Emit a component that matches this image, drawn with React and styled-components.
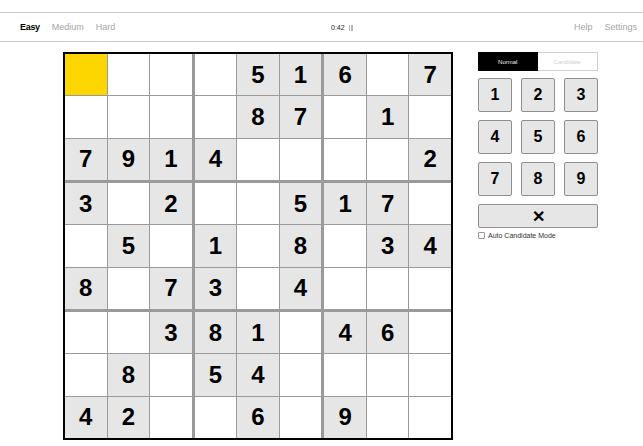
import React from 'react';
import styled, { createGlobalStyle } from 'styled-components';

const GlobalStyle = createGlobalStyle`
  body {
    margin: 0;
    background: #fff;
    font-family: "Liberation Sans", Arial, sans-serif;
  }
`;

const Page = styled.div`
  width: 643px;
  height: 446px;
  overflow: hidden;
  padding-top: 12px;
  box-sizing: border-box;
`;

const Header = styled.header`
  display: flex;
  align-items: center;
  height: 28px;
  border-top: 1px solid #c8c8c8;
  border-bottom: 1px solid #c8c8c8;
  padding: 0 6px 0 20px;
  font-size: 9px;
`;

const Levels = styled.nav`
  display: flex;
  gap: 12px;
  flex: 0 0 311px;
`;

const Level = styled.span`
  color: ${p => (p.$active ? '#000' : '#a6a6a6')};
  font-weight: ${p => (p.$active ? 700 : 400)};
  letter-spacing: ${p => (p.$active ? '-0.3px' : '0')};
`;

const Timer = styled.div`
  display: flex;
  align-items: center;
  gap: 4px;
  font-size: 7px;
  color: #222;
`;

const PauseIcon = styled.span`
  display: inline-flex;
  gap: 1px;
  margin-top: 2px;
  span {
    width: 1.5px;
    height: 6px;
    background: #b5b5b5;
  }
`;

const Links = styled.nav`
  margin-left: auto;
  display: flex;
  gap: 12px;
  color: #a6a6a6;
`;

const Main = styled.main`
  display: flex;
  align-items: flex-start;
  padding: 10px 0 0 63px;
  gap: 25px;
`;

const Board = styled.div`
  width: 390px;
  height: 388px;
  box-sizing: border-box;
  border: 2px solid #000;
  background: #9a9a9a;
  display: grid;
  grid-template-columns: repeat(3, 1fr);
  grid-template-rows: repeat(3, 1fr);
  gap: 3px;
`;

const Box = styled.div`
  display: grid;
  grid-template-columns: repeat(3, 1fr);
  grid-template-rows: repeat(3, 1fr);
  gap: 1px;
`;

const Cell = styled.div`
  display: flex;
  align-items: center;
  justify-content: center;
  background: ${p => (p.$selected ? '#fdd600' : p.$given ? '#e6e6e6' : '#fff')};
  font-size: 24px;
  font-weight: 700;
  color: #000;
`;

const Panel = styled.aside`
  width: 120px;
  display: flex;
  flex-direction: column;
`;

const Toggle = styled.div`
  display: flex;
  height: 19px;
  border: 1px solid #d0d0d0;
  box-sizing: border-box;
`;

const ToggleOption = styled.div`
  flex: 1;
  display: flex;
  align-items: center;
  justify-content: center;
  font-size: 6px;
  background: ${p => (p.$on ? '#000' : '#fff')};
  color: ${p => (p.$on ? '#eee' : '#cfcfcf')};
  margin: ${p => (p.$on ? '-1px 0 -1px -1px' : '0')};
`;

const Keypad = styled.div`
  display: grid;
  grid-template-columns: repeat(3, 34px);
  grid-auto-rows: 34px;
  column-gap: 9px;
  row-gap: 8px;
  margin-top: 7px;
`;

const Key = styled.button`
  display: flex;
  align-items: center;
  justify-content: center;
  padding: 0;
  background: #e6e6e6;
  border: 1px solid #8f8f8f;
  border-radius: 2px;
  font-family: "Liberation Sans", Arial, sans-serif;
  font-weight: 700;
  font-size: 16px;
  color: #000;
`;

const EraseKey = styled(Key)`
  margin-top: 8px;
  height: 24px;
  width: 120px;
  font-size: 16px;
`;

const AutoMode = styled.label`
  display: flex;
  align-items: center;
  gap: 3px;
  margin-top: 4px;
  font-size: 7px;
  color: #333;
`;

const Box5 = styled.span`
  width: 5px;
  height: 5px;
  border: 1px solid #999;
  border-radius: 1px;
`;

const puzzle = [
  '....516.7',
  '....87.1.',
  '7914....2',
  '3.2..517.',
  '.5.1.8.34',
  '8.73.4...',
  '..381.46.',
  '.8.54....',
  '42..6.9..',
];

const cellAt = (r, c) => {
  const ch = puzzle[r][c];
  return ch === '.' ? null : ch;
};

export default function App() {
  const boxes = [];
  for (let b = 0; b < 9; b++) {
    const br = Math.floor(b / 3) * 3;
    const bc = (b % 3) * 3;
    const cells = [];
    for (let i = 0; i < 9; i++) {
      const r = br + Math.floor(i / 3);
      const c = bc + (i % 3);
      const v = cellAt(r, c);
      cells.push(
        <Cell key={i} $given={!!v} $selected={r === 0 && c === 0}>
          {v}
        </Cell>
      );
    }
    boxes.push(<Box key={b}>{cells}</Box>);
  }

  return (
    <Page>
      <GlobalStyle />
      <Header>
        <Levels>
          <Level $active>Easy</Level>
          <Level>Medium</Level>
          <Level>Hard</Level>
        </Levels>
        <Timer>
          0:42
          <PauseIcon>
            <span />
            <span />
          </PauseIcon>
        </Timer>
        <Links>
          <span>Help</span>
          <span>Settings</span>
        </Links>
      </Header>
      <Main>
        <Board>{boxes}</Board>
        <Panel>
          <Toggle>
            <ToggleOption $on>Normal</ToggleOption>
            <ToggleOption>Candidate</ToggleOption>
          </Toggle>
          <Keypad>
            {[1, 2, 3, 4, 5, 6, 7, 8, 9].map(n => (
              <Key key={n}>{n}</Key>
            ))}
          </Keypad>
          <EraseKey>✕</EraseKey>
          <AutoMode>
            <Box5 />
            Auto Candidate Mode
          </AutoMode>
        </Panel>
      </Main>
    </Page>
  );
}
